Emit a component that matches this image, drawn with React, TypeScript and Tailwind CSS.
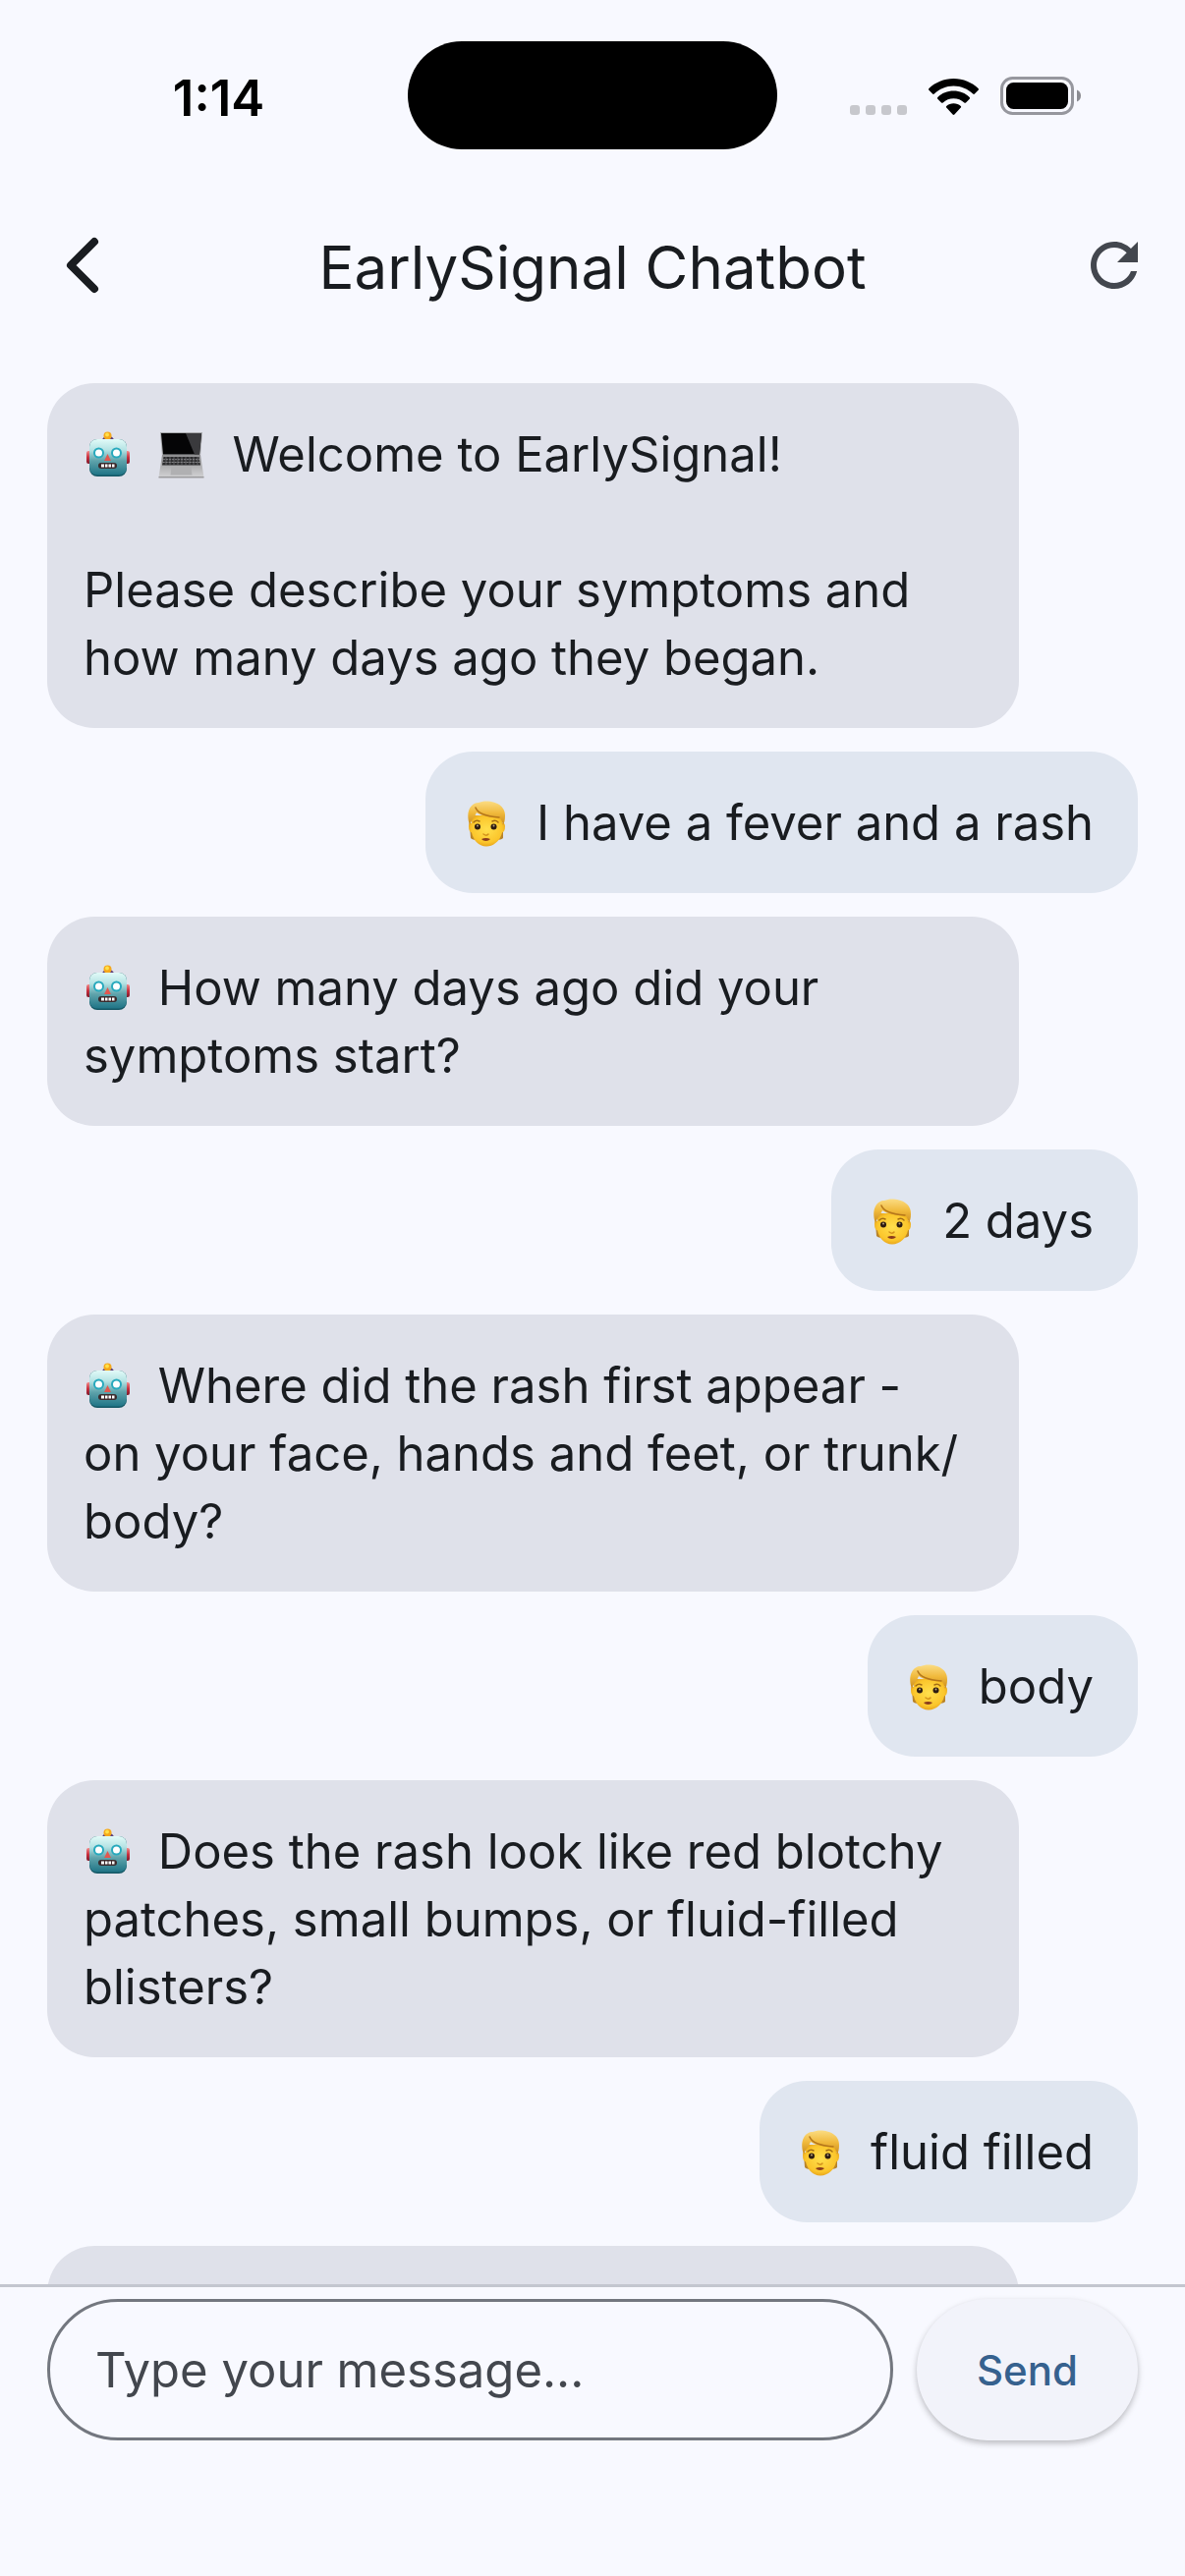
import { Fragment } from "react";

type Message = { from: "bot" | "user"; text: string; laptop?: boolean };

const messages: Message[] = [
  {
    from: "bot",
    laptop: true,
    text: "Welcome to EarlySignal!\n\nPlease describe your symptoms and\nhow many days ago they began.",
  },
  { from: "user", text: "I have a fever and a rash" },
  { from: "bot", text: "How many days ago did your\nsymptoms start?" },
  { from: "user", text: "2 days" },
  {
    from: "bot",
    text: "Where did the rash first appear -\non your face, hands and feet, or trunk/\nbody?",
  },
  { from: "user", text: "body" },
  {
    from: "bot",
    text: "Does the rash look like red blotchy\npatches, small bumps, or fluid-filled\nblisters?",
  },
  { from: "user", text: "fluid filled" },
  { from: "bot", text: "" },
];

const emojiClass = "mr-3 inline-block h-[50px] w-[50px] align-[-8px]";

function Robot() {
  return (
    <svg viewBox="0 0 50 50" className={emojiClass} role="img" aria-label="robot">
      <defs>
        <linearGradient id="robotFace" x1="0" y1="0" x2="0" y2="1">
          <stop offset="0" stopColor="#e2fbf8" />
          <stop offset="0.3" stopColor="#b5e3e4" />
          <stop offset="0.6" stopColor="#5fa3ab" />
          <stop offset="1" stopColor="#1f7486" />
        </linearGradient>
        <linearGradient id="robotEar" x1="0" y1="0" x2="0" y2="1">
          <stop offset="0" stopColor="#f08a8a" />
          <stop offset="0.5" stopColor="#c9303f" />
          <stop offset="1" stopColor="#7d1a2c" />
        </linearGradient>
      </defs>
      <rect x="3" y="21" width="6" height="13" rx="2" fill="url(#robotEar)" />
      <rect x="41" y="21" width="6" height="13" rx="2" fill="url(#robotEar)" />
      <path d="M19 11c0-4 3-5 6-5s6 1 6 5z" fill="#5b3f7c" />
      <circle cx="24.500" cy="5.500" r="4" fill="#f5a81c" />
      <circle cx="24" cy="4.500" r="2" fill="#ffe14a" />
      <rect x="6" y="9" width="38" height="38" rx="8" fill="#155866" />
      <rect x="6" y="9" width="38" height="36.500" rx="8" fill="url(#robotFace)" />
      <circle cx="15.500" cy="23" r="5.500" fill="#27a9bd" />
      <circle cx="15.500" cy="23" r="3.500" fill="#fff" />
      <circle cx="33.500" cy="23" r="5.500" fill="#27a9bd" />
      <circle cx="33.500" cy="23" r="3.500" fill="#fff" />
      <path d="M24.500 24l3.500 7h-7z" fill="#e2574f" />
      <rect x="15" y="33" width="19" height="6" rx="3" fill="#3b2a2c" />
      <path d="M18 34.500h3v3h-3zM22 34.500h2.500v3H22zM25.500 34.500H28v3h-2.500zM29 34.500h2.500v3H29z" fill="#fff" />
    </svg>
  );
}

function Laptop() {
  return (
    <svg viewBox="0 0 50 50" className={emojiClass} role="img" aria-label="laptop">
      <defs>
        <linearGradient id="laptopBase" x1="0" y1="0" x2="0" y2="1">
          <stop offset="0" stopColor="#8d8d8f" />
          <stop offset="1" stopColor="#d2d2d4" />
        </linearGradient>
      </defs>
      <path d="M2 2h43l-2 24H4z" fill="#a9aaad" />
      <path d="M3 3h41l-2 21.500H5z" fill="#050506" />
      <path d="M28 3h16l-2 21.500h-5z" fill="#3a3a3d" />
      <path d="M4 25h39l3.500 23H.5z" fill="url(#laptopBase)" />
      <path d="M5.500 27h36l1.500 8.500H4z" fill="#2c2c2e" />
      <path d="M5 29.700h37.500M4.500 32.500H43" stroke="#9a9a9d" strokeWidth="0.800" strokeDasharray="2.200 0.800" />
      <path d="M8 27v8M12 27v8M16 27v8M20 27v8M24 27v8M28 27v8M32 27v8M36 27v8M40 27v8" stroke="#88888b" strokeWidth="0.600" />
      <path d="M13.500 37h20l1 8.500h-22z" fill="#b0b0b2" />
      <path d="M.5 47h46v1.500H.5z" fill="#9b9b9d" />
    </svg>
  );
}

function Person() {
  return (
    <svg viewBox="0 0 50 50" className={emojiClass} role="img" aria-label="person">
      <defs>
        <radialGradient id="personFace" cx="0.500" cy="0.450" r="0.600">
          <stop offset="0" stopColor="#ffdf4d" />
          <stop offset="0.7" stopColor="#fbc62c" />
          <stop offset="1" stopColor="#e29a16" />
        </radialGradient>
        <linearGradient id="personHair" x1="0" y1="0" x2="0" y2="1">
          <stop offset="0" stopColor="#fbdc83" />
          <stop offset="0.5" stopColor="#f0b93b" />
          <stop offset="1" stopColor="#c98a1c" />
        </linearGradient>
      </defs>
      <path d="M8 27h34v13c-2 2-5 2-7 1H15c-2 1-4 1-6-1z" fill="#b8842a" />
      <path d="M7 28c0-3 1-4 3-3v-8h31v8c2-1 3 1 3 3 0 4-1 6-3 6.500C39.500 42 33 48.500 25 48.500S11.500 42 10 34.500C8 34 7 32 7 28z" fill="url(#personFace)" />
      <path d="M8 27C3 12 10 4 17 4c8-4 28-1 27 14 0 4-1 7-2 9-1-4-2-7-4-8-9 0-18-1-23-5-2 5-5 7-7 13z" fill="url(#personHair)" />
      <path d="M14 9c2 6 12 9 24 10" fill="none" stroke="#b5761a" strokeWidth="1.500" strokeLinecap="round" />
      <path d="M12 24c2-2 4-2 6-1M31 23c2-1 4-1 6 1" fill="none" stroke="#a36d14" strokeWidth="1.500" strokeLinecap="round" />
      <circle cx="16" cy="28.500" r="3" fill="#2c1c11" />
      <circle cx="32.500" cy="28.500" r="3" fill="#2c1c11" />
      <circle cx="16" cy="27.500" r="1" fill="#bba37a" />
      <circle cx="32.500" cy="27.500" r="1" fill="#bba37a" />
      <path d="M22 36c2 1.500 4 1.500 5 0" fill="none" stroke="#d3921b" strokeWidth="1.500" strokeLinecap="round" />
      <path d="M20 41c3-1.500 6-1.500 9 0-2 2.500-7 2.500-9 0z" fill="#8a3b1c" />
    </svg>
  );
}

function StatusBar() {
  return (
    <div className="grid shrink-0 grid-cols-[1fr_376px_1fr] items-center pt-[42px] pb-[34px]">
      <div className="pl-[30px] pt-1 text-center text-[51px] leading-none font-semibold text-black">1:14</div>
      <div className="h-[110px] rounded-full bg-black" />
      <div className="flex items-end justify-center gap-[22px] pr-8">
        <div className="flex gap-1.5">
          {[0, 1, 2, 3].map((dot) => (
            <span key={dot} className="size-2.5 rounded-[3px] bg-[#c7c8cd]" />
          ))}
        </div>
        <svg viewBox="0 0 51 37" className="h-[37px] w-[51px]" role="img" aria-label="Wi-Fi">
          <path d="M25.500 0C35.300 0 44.200 3.800 50.600 10.100c.5.500.5 1.200 0 1.700l-3.700 3.800c-.4.500-1.200.5-1.700 0C40 10.600 33.100 7.600 25.500 7.600S11 10.600 5.800 15.600c-.5.500-1.300.5-1.700 0L.4 11.800c-.5-.5-.5-1.200 0-1.700C6.800 3.800 15.700 0 25.500 0z" />
          <path d="M25.500 12.600c6.300 0 12 2.400 16.200 6.400.5.500.5 1.200 0 1.700l-3.700 3.700c-.5.500-1.200.5-1.700 0-2.900-2.600-6.600-4.200-10.800-4.200s-7.900 1.600-10.800 4.200c-.5.500-1.200.5-1.700 0l-3.700-3.700c-.5-.5-.5-1.200 0-1.700 4.200-4 9.900-6.400 16.200-6.400z" />
          <path d="M25.500 25.200c2.800 0 5.400 1 7.300 2.700.5.500.5 1.200 0 1.700l-6.400 6.900c-.5.500-1.300.5-1.800 0l-6.400-6.900c-.5-.5-.5-1.200 0-1.700 1.900-1.700 4.500-2.700 7.300-2.700z" />
        </svg>
        <svg viewBox="0 0 82 39" className="h-[39px] w-[82px]" role="img" aria-label="Battery full">
          <rect x="1.500" y="1.500" width="72" height="36" rx="11" fill="none" stroke="#96979e" strokeWidth="3" />
          <rect x="6" y="6" width="63" height="27" rx="7.500" />
          <path d="M78 13.500c2.500 1 4 3.300 4 6s-1.500 5-4 6z" fill="#8b8c92" />
        </svg>
      </div>
    </div>
  );
}

function Header() {
  return (
    <header className="grid h-[168px] shrink-0 grid-cols-[1fr_auto_1fr] items-center px-9">
      <button type="button" aria-label="Back" className="size-24 justify-self-start">
        <svg viewBox="0 0 96 96" className="size-24" fill="none" stroke="#191c20" strokeWidth="8" strokeLinecap="round" strokeLinejoin="round">
          <path d="M60 24L36 48L60 72" />
        </svg>
      </button>
      <h1 className="pt-1 text-[60px] leading-[84px] text-[#191c20]">EarlySignal Chatbot</h1>
      <button type="button" aria-label="Restart chat" className="size-[72px] justify-self-end">
        <svg viewBox="0 0 24 24" className="size-[72px]" fill="#43474e">
          <path d="M17.650 6.350C16.200 4.900 14.210 4 12 4c-4.420 0-7.990 3.580-7.990 8s3.570 8 7.990 8c3.730 0 6.840-2.550 7.730-6h-2.080c-.82 2.330-3.040 4-5.650 4-3.310 0-6-2.690-6-6s2.690-6 6-6c1.660 0 3.140.69 4.220 1.780L13 11h7V4l-2.350 2.350z" />
        </svg>
      </button>
    </header>
  );
}

function Bubble({ message }: { message: Message }) {
  const isBot = message.from === "bot";
  return (
    <li
      className={
        isBot
          ? "min-h-36 w-[82vw] shrink-0 self-start rounded-[48px] bg-[#dfe1ea] px-[37px] pt-[38px] pb-[37px] whitespace-pre-line"
          : "shrink-0 self-end rounded-[48px] bg-[#e0e6f0] pt-[38px] pr-[45px] pb-[37px] pl-[37px] whitespace-pre-line"
      }
    >
      {message.text && (
        <Fragment>
          {isBot ? <Robot /> : <Person />}{" "}
          {message.laptop && (
            <Fragment>
              <Laptop />{" "}
            </Fragment>
          )}
          {message.text}
        </Fragment>
      )}
    </li>
  );
}

export default function App() {
  return (
    <div className="flex h-screen flex-col bg-[#f8f9ff] font-[Inter,sans-serif] text-[#191c20]">
      <StatusBar />
      <Header />
      <main className="min-h-0 flex-1 overflow-hidden">
        <ul className="flex flex-col gap-6 px-12 pt-9 text-[49px] leading-[69px]">
          {messages.map((message, index) => (
            <Bubble key={index} message={message} />
          ))}
        </ul>
      </main>
      <form
        className="flex shrink-0 gap-6 border-t-[3px] border-[#c3c6cf] px-12 pt-3 pb-[138px]"
        onSubmit={(event) => event.preventDefault()}
      >
        <input
          type="text"
          aria-label="Message"
          placeholder="Type your message..."
          className="h-36 min-w-0 flex-1 rounded-full border-[3px] border-[#73777f] bg-transparent px-[46px] text-[49px] placeholder:text-[#43474e] focus:outline-none"
        />
        <button
          type="submit"
          className="h-36 w-[225px] rounded-full bg-[#f2f3fa] text-[42px] font-medium text-[#36618e] shadow-[0_3px_6px_rgba(0,0,0,0.25)]"
        >
          Send
        </button>
      </form>
    </div>
  );
}
